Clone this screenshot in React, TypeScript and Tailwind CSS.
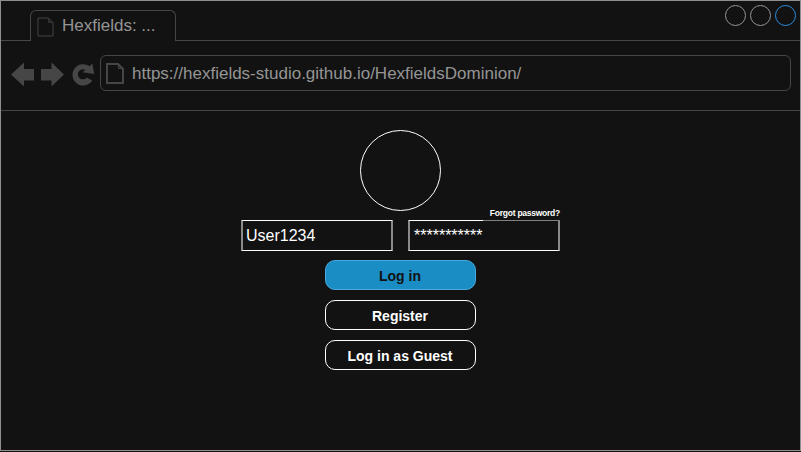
import React from "react";

function PageIcon({ className, strokeWidth = 1 }: { className: string; strokeWidth?: number }) {
  return (
    <svg viewBox="0 0 18 21" className={className} fill="none" stroke="#464646" strokeWidth={strokeWidth}>
      <path d="M1 1H12L17 6V20H1Z" />
      <path d="M12.5 1.5V5.5H16.5" strokeWidth={1} />
    </svg>
  );
}

function NavIcons() {
  return (
    <svg viewBox="1 41 99 69" className="h-[69px] w-[99px] shrink-0" fill="#464646">
      <path d="M11 74.5L24 62.5V69H34V80.5H24V86.5Z" />
      <path d="M64 74.5L51.5 62.5V69H41V80.5H51.5V86.5Z" />
      <path d="M92.2 80.6A10.7 10.7 0 1 1 89.6 66.3L92.4 63.6L94.2 74L82.4 72.2L85.4 70A5 5 0 1 0 86.8 77.4Z" />
    </svg>
  );
}

function WindowButton({ color }: { color: string }) {
  return <span className={`size-[21px] rounded-full border ${color}`} />;
}

function Button({ label, primary = false }: { label: string; primary?: boolean }) {
  return (
    <button
      className={`flex h-[30px] w-[151px] items-center justify-center rounded-[10px] border pt-[2px] pr-px text-[14px] leading-none font-bold ${
        primary ? "border-[#49a8e0] bg-[#1a8dc5] text-[#121212]" : "border-white text-white"
      }`}
    >
      {label}
    </button>
  );
}

export default function App() {
  return (
    <div className="h-[452px] w-[801px] bg-[#121212] font-['Liberation_Sans',Arial,sans-serif]">
      <div className="flex h-[451px] flex-col border border-[#8f8f8f]">
        <header className="flex h-10 shrink-0 items-end">
          <div className="h-px w-[29px] bg-[#464646]" />
          <div className="flex h-[31px] w-[146px] items-center rounded-t-[6px] border border-b-0 border-[#464646] pl-[6px]">
            <PageIcon className="mt-px h-[20px] w-[17px]" />
            <span className="pb-[2px] pl-[8px] text-[17px] leading-none text-[#959595]">Hexfields: ...</span>
          </div>
          <div className="flex h-full flex-1 justify-end gap-1 border-b border-[#464646] pt-1 pr-1">
            <WindowButton color="border-[#959595]" />
            <WindowButton color="border-[#959595]" />
            <WindowButton color="border-[#2a8de0]" />
          </div>
        </header>
        <nav className="flex h-[70px] shrink-0 items-start border-b border-[#464646]">
          <NavIcons />
          <div className="mt-[14px] flex h-9 w-[691px] items-center rounded-[6px] border border-[#464646] pl-[5px]">
            <PageIcon className="h-[21px] w-[18px]" strokeWidth={2} />
            <span className="pl-[8px] text-[17px] leading-none text-[#959595]">
              https://hexfields-studio.github.io/HexfieldsDominion/
            </span>
          </div>
        </nav>
        <main className="flex flex-col items-center pt-[19px] text-white">
          <div className="size-[81px] rounded-full border border-white" />
          <div className="mt-[9px] flex gap-[15px]">
            <div className="flex h-[31px] w-[152px] items-center border-x-2 border-y border-x-[#8a8a8a] border-y-white pl-[3px] text-[16px] leading-none">
              User1234
            </div>
            <div className="relative flex h-[31px] w-[152px] items-center border-x-2 border-y border-x-[#8a8a8a] border-y-white pl-1 text-[16px] leading-none">
              ***********
              <div className="absolute -top-4 -right-[2px] flex h-4 w-[77px] items-center justify-end border-b border-[#808080] pt-px text-[8.5px] leading-none font-bold tracking-[-0.25px] whitespace-nowrap">
                Forgot password?
              </div>
            </div>
          </div>
          <div className="mt-[9px] flex flex-col gap-[10px]">
            <Button label="Log in" primary />
            <Button label="Register" />
            <Button label="Log in as Guest" />
          </div>
        </main>
      </div>
    </div>
  );
}
